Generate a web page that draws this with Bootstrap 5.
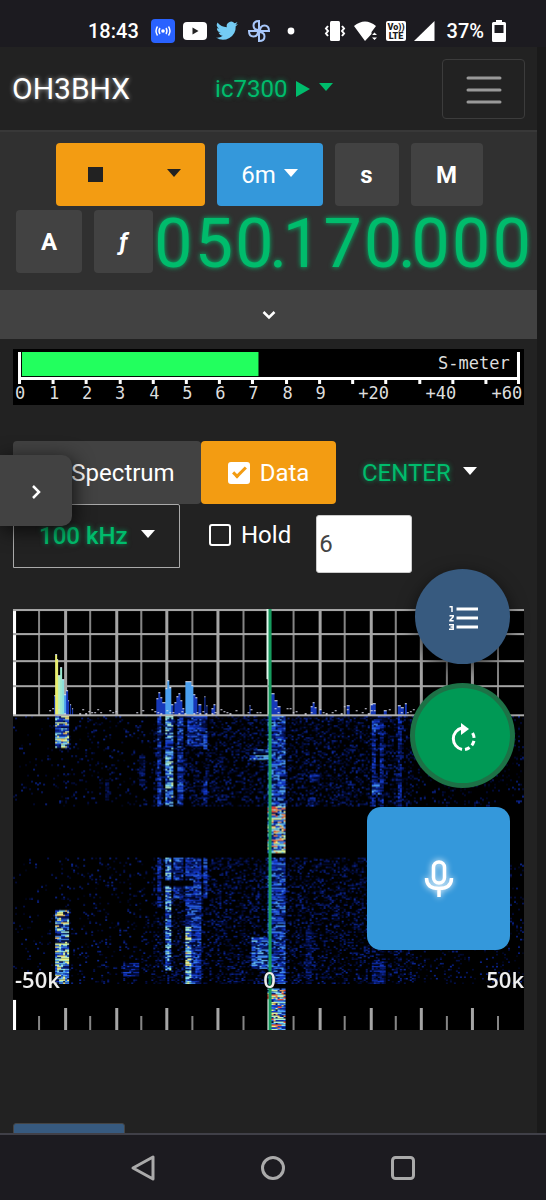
<!DOCTYPE html>
<html lang="en">
<head>
<meta charset="utf-8">
<meta name="viewport" content="width=device-width, initial-scale=1">
<title>OH3BHX</title>
<link href="https://cdn.jsdelivr.net/npm/bootstrap@5.3.0/dist/css/bootstrap.min.css" rel="stylesheet">
<style>
:root { --glow: #00bc6c; }
body { background: #222; color: #fff; font: 24px/36px Roboto, sans-serif; }
.phone-bar { background: #1c1b20; height: 47px; padding: 14px 40px 0 88px; font-size: 20px; line-height: 30px; font-weight: 500; }
.phone-bar svg { flex: none; }
.phone-bar .first-icon { margin-left: 12px; }
.app-area { border-right: 9px solid #1a1a1a; }
.top-nav { height: 85px; padding: 0 12px; border-bottom: 2px solid #383838; }
.call-sign { font-size: 30px; color: #fff; text-shadow: 0 0 5px #fff9; margin-right: 85px; }
.glow, .glow:hover { color: var(--glow); text-shadow: 0 0 5px #00bc6caa; }
.menu-btn { width: 83px; height: 60px; border: 1px solid #3c3c3c; border-radius: 4px; background: none; padding: 0; }
.tri { display: inline-block; border: 7px solid transparent; border-top: 8px solid; border-bottom: 0; }
.radio-panel { background: #303030; padding: 11px 5px 16px 16px; }
.tune-row { margin-left: -10px; gap: 12px; margin-bottom: 4px; }
.ctl { --bs-btn-color: #fff; --bs-btn-bg: #424242; --bs-btn-hover-bg: #505050; --bs-btn-hover-color: #fff; --bs-btn-border-color: transparent;
  height: 63px; padding: 0 12px; font-size: 24px; line-height: 36px; border: 0; border-radius: 4px; display: flex; align-items: center; justify-content: center; }
.ctl.orange { --bs-btn-bg: #f39c12; --bs-btn-hover-bg: #e08e0b; }
.ctl.blue { --bs-btn-bg: #3498db; --bs-btn-hover-bg: #2a86c4; }
.ctl.dark-ink { color: #222; }
.w-60 { width: 59px; } .w-64 { width: 64px; } .w-66 { width: 66px; } .w-72 { width: 72px; } .w-106 { width: 106px; } .w-135 { width: 135px; } .w-149 { width: 149px; } .w-188 { width: 188px; }
.stop-sq { width: 15px; height: 15px; background: #222; }
.freq { font: 400 68px/68px Roboto, sans-serif; color: var(--glow); text-shadow: 0 0 5px #00bc6c; height: 64px; min-width: 0; }
.freq span { flex: 1 1 0; min-width: 0; display: flex; justify-content: center; }
.freq .dot { flex: 0 0 7px; }
.expand { height: 49px; background: #424242; border: 0; }
.content-pad { padding: 10px 13px 0 13px; }
.meter { background: #000; margin-bottom: 36px; }
.meter text { font: 17px "DejaVu Sans Mono", monospace; fill: #ddd; text-anchor: middle; }
.pick { width: 167px; height: 64px; border: 1px solid #aaa; border-radius: 2px 2px 0 0; background: none; padding: 0 24px 0 25px; }
.plain { background: none; border: 0; padding: 0; }
.box { appearance: none; width: 22px; height: 22px; margin: 0; border: 2px solid #fff; border-radius: 3px; flex: none; }
.box:checked { background: #fff; }
.box:checked::after { content: ""; display: block; width: 7px; height: 14px; margin-left: 6px; border: solid #f39c12; border-width: 0 3px 3px 0; transform: rotate(45deg); }
.gap-check { gap: 10px; }
.center-pick { gap: 12px; margin-left: 26px; }
.hold { margin: 13px 25px 0 29px; }
.avg { width: 96px; height: 58px; border: 1px solid #ccc; border-radius: 3px; padding: 0 2px; color: #444; font-size: 24px; margin-top: 11px; }
.scope { margin-top: 36px; background: #000; }
.scope canvas { display: block; width: 100%; }
.scope-labels { left: 2px; right: 0; bottom: 36px; font: 600 22px/30px "Open Sans", sans-serif; color: #eee; text-shadow: 0 0 2px #000; }
.scope-labels span { flex: 1 1 0; }
.drawer { left: 0; top: 455px; width: 72px; height: 71px; background: #424242; border: 0; border-radius: 0 10px 10px 0; box-shadow: 2px 4px 20px #000b; }
.float-stack { right: 36px; bottom: 250px; gap: 24px; }
.round { width: 95px; height: 95px; border: 0; border-radius: 50%; background: #375a7f; padding: 0; box-shadow: 0 6px 18px #000a; }
.round.green { background: #009955; box-shadow: 0 0 0 5px #1d7146, 0 4px 18px #000a; }
.mic { width: 143px; height: 143px; border: 0; border-radius: 14px; background: #3498db; padding: 0; }
.mic svg { filter: drop-shadow(0 0 3px #fff); }
.more { width: 112px; height: 60px; margin-top: 93px; background: #375a7f; border: 1px solid #444; border-radius: 3px; }
.phone-nav { height: 67px; background: #1c1b20; border-top: 2px solid #404048; gap: 100px; }
</style>
</head>
<body>
<div class="vh-100 d-flex flex-column overflow-hidden position-relative">
  <div class="phone-bar d-flex align-items-center flex-shrink-0">
    <span class="me-auto d-flex align-items-center">
      <span>18:43</span>
      <svg class="first-icon" width="24" height="24" viewBox="0 0 24 24" fill="none" stroke="#fff" stroke-width="1.4"><rect width="24" height="24" rx="4" fill="#2962ff" stroke="none"/><circle cx="12" cy="12" r="1.8" fill="#fff" stroke="none"/><path d="M9 9q-2 3 0 6M15 9q2 3 0 6M6.500 7.500q-3 4.500 0 9M17.500 7.500q3 4.500 0 9"/></svg>
      <svg class="ms-2" width="24" height="24" viewBox="0 0 24 24"><rect y="3" width="24" height="18" rx="4" fill="#fff"/><path d="M9.500 8.500v7l6-3.500z" fill="#222"/></svg>
      <svg class="ms-2" width="24" height="24" viewBox="0 0 24 24"><path fill="#74ccf4" d="M23 4.900a9 9 0 0 1-2.600.7 4.500 4.500 0 0 0 2-2.500 9 9 0 0 1-2.900 1.100 4.500 4.500 0 0 0-7.700 4.100A12.800 12.800 0 0 1 2.500 3.600a4.500 4.500 0 0 0 1.400 6 4.500 4.500 0 0 1-2-.6 4.500 4.500 0 0 0 3.600 4.500 4.500 4.500 0 0 1-2 .1 4.500 4.500 0 0 0 4.200 3.100A9 9 0 0 1 1 18.600a12.800 12.800 0 0 0 19.700-11.400A9 9 0 0 0 23 4.900z"/></svg>
      <svg class="ms-2" width="24" height="24" viewBox="0 0 24 24" fill="none" stroke="#a8c7fa" stroke-width="2"><path id="fan" d="M12 12V2Q6.500 2 6.500 6.500T12 11"/><use href="#fan" transform="rotate(90 12 12)"/><use href="#fan" transform="rotate(180 12 12)"/><use href="#fan" transform="rotate(270 12 12)"/></svg>
      <svg class="ms-3" width="8" height="8" viewBox="0 0 8 8"><circle cx="4" cy="4" r="3.400" fill="#fff"/></svg>
    </span>
    <span class="d-flex align-items-center gap-2">
      <svg width="22" height="22" viewBox="0 0 22 22" fill="none" stroke="#fff" stroke-width="2"><rect x="6" y="1" width="10" height="20" rx="1.500" fill="#fff" stroke="none"/><path d="M4 6 2 8.500l2 2.500-2 2.500L4 16M18 6l2 2.500-2 2.500 2 2.500-2 2.500"/></svg>
      <svg width="24" height="22" viewBox="0 0 24 22" fill="#fff"><path d="M0 6q11-9 22 0l-4.500 6v2L11 21zM18 15l2.500-2.500L23 15zM18 17.500h5L20.500 20z"/></svg>
      <svg width="20" height="22" viewBox="0 0 20 22"><rect y="1" width="20" height="20" rx="2" fill="#fff"/><text x="10" y="10" text-anchor="middle" font-family="Roboto" font-weight="900" font-size="9" fill="#1c1b20">Vo))</text><text x="10" y="19" text-anchor="middle" font-family="Roboto" font-weight="900" font-size="9" fill="#1c1b20">LTE</text></svg>
      <svg width="21" height="22" viewBox="0 0 21 22"><path d="M20.500 1v20H0z" fill="#fff"/></svg>
      <span class="ms-1">37%</span>
      <svg width="14" height="22" viewBox="0 0 14 22"><path fill="#fff" fill-rule="evenodd" d="M4 0h6v2h2.500q1.500 0 1.500 1.500v17q0 1.500-1.500 1.500h-11Q0 22 0 20.500v-17Q0 2 1.500 2H4zM2.500 5v8h9V5z"/></svg>
    </span>
  </div>

  <div class="app-area flex-grow-1 overflow-hidden">
    <nav class="top-nav d-flex align-items-center">
      <a class="call-sign text-decoration-none" href="#">OH3BHX</a>
      <button class="plain glow d-flex align-items-center" type="button">ic7300
        <svg class="ms-2" width="16" height="18" viewBox="0 0 16 18"><path d="M1 1v16l14-8z" fill="#00bc6c"/></svg>
        <span class="tri ms-2 mb-1"></span></button>
      <button class="menu-btn ms-auto" type="button" aria-label="Menu"><svg width="38" height="30" viewBox="0 0 38 30" stroke="#999" stroke-width="3" stroke-linecap="round"><path d="M3 3h32M3 15h32M3 27h32"/></svg></button>
    </nav>

    <section class="radio-panel">
      <div class="tune-row d-flex justify-content-center">
        <button class="btn ctl orange dark-ink w-149 justify-content-between px-4" type="button" aria-label="Mode"><span class="stop-sq ms-2"></span><span class="tri mb-1"></span></button>
        <button class="btn ctl blue w-106" type="button">6m<span class="tri ms-2 mb-1"></span></button>
        <button class="btn ctl w-64 fw-bold" type="button">s</button>
        <button class="btn ctl w-72 fw-bold" type="button">M</button>
      </div>
      <div class="d-flex">
        <button class="btn ctl w-66 fw-bold flex-shrink-0 me-2" type="button">A</button>
        <button class="btn ctl w-60 fw-bold fst-italic flex-shrink-0 ms-1" type="button">ƒ</button>
        <div class="freq d-flex flex-grow-1"><span>0</span><span>5</span><span>0</span><span class="dot">.</span><span>1</span><span>7</span><span>0</span><span class="dot">.</span><span>0</span><span>0</span><span>0</span></div>
      </div>
    </section>
    <button class="expand w-100 d-flex align-items-center justify-content-center" type="button" aria-label="Expand"><svg width="14" height="10" viewBox="0 0 14 10" fill="none" stroke="#fff" stroke-width="2.500"><path d="m1.500 2 5.500 5.500L12.500 2"/></svg></button>

    <main class="content-pad">
      <svg class="meter d-block w-100" viewBox="0 0 510 56">
        <rect x="9" y="3" width="236" height="24" fill="#22ff5e"/>
        <path fill="none" stroke="#fff" stroke-width="3" d="M6.500 3v32M504.500 3v32M5 29.500h500M40 30v5M73 30v5M107 30v5M140 30v5M173 30v5M206 30v5M239 30v5M273 30v5M306 30v5M339 30v5M372 30v5M406 30v5M439 30v5M472 30v5"/>
        <text x="460" y="20">S-meter</text>
        <text x="7" y="50">0</text><text x="41" y="50">1</text><text x="74" y="50">2</text><text x="107" y="50">3</text><text x="141" y="50">4</text><text x="174" y="50">5</text><text x="207" y="50">6</text><text x="240" y="50">7</text><text x="274" y="50">8</text><text x="307" y="50">9</text>
        <text x="360" y="50">+20</text><text x="427" y="50">+40</text><text x="493" y="50">+60</text>
      </svg>

      <div class="d-flex align-items-center">
        <label class="btn ctl gap-check w-188"><input class="box" type="checkbox"><span>Spectrum</span></label>
        <label class="btn ctl gap-check orange w-135"><input class="box" type="checkbox" checked>Data</label>
        <button class="plain glow center-pick d-flex align-items-center" type="button">CENTER<span class="tri mb-1 text-white"></span></button>
      </div>
      <div class="d-flex align-items-start">
        <button class="pick glow d-flex align-items-center justify-content-between fw-medium" type="button">100 kHz<span class="tri mb-1 text-white"></span></button>
        <label class="hold gap-check d-flex align-items-center"><input class="box" type="checkbox">Hold</label>
        <input class="avg" type="text" value="6" aria-label="Averaging">
      </div>

      <div class="scope position-relative">
        <canvas id="scope" width="510" height="420"></canvas>
        <div class="scope-labels position-absolute d-flex"><span>-50k</span><span class="text-center">0</span><span class="text-end">50k</span></div>
      </div>
      <button class="more d-block" type="button" aria-label="More"></button>
    </main>
  </div>

  <button class="drawer position-absolute" type="button" aria-label="Open side panel"><svg width="10" height="16" viewBox="0 0 10 16" fill="none" stroke="#fff" stroke-width="2.500"><path d="m2 2 6 6-6 6"/></svg></button>

  <div class="float-stack position-absolute d-flex flex-column align-items-end">
    <button class="round" type="button" aria-label="Memory list"><svg width="30" height="26" viewBox="0 0 30 26" fill="none" stroke="#fff"><path stroke-width="3" d="M8.500 4H30M8.500 13H30M8.500 22H30"/><path stroke-width="1.500" d="M1.500 1.800H4V7M1.500 10.800h3.700v1L2 15.200v.5h3.700M1 19.800h4.200v4.400H1M2.500 22h2.700"/></svg></button>
    <button class="round green" type="button" aria-label="Refresh"><svg width="30" height="30" viewBox="0 0 30 30" fill="none" stroke="#fff" stroke-width="3"><path d="M14 27.500A11 11 0 0 1 14 6"/><path stroke-dasharray="5 3" d="M17 27.500A11 11 0 0 0 23 9"/><path d="m13 1 8 6-8 6z" fill="#fff" stroke="none"/></svg></button>
    <button class="mic" type="button" aria-label="Push to talk"><svg width="30" height="38" viewBox="0 0 30 38" fill="none" stroke="#fff" stroke-width="3.500"><rect x="9.500" y="2" width="11" height="21" rx="5.500"/><path d="M2.500 18q0 10.500 12.500 10.500T27.500 18M15 28.500V37"/></svg></button>
  </div>

  <div class="phone-nav d-flex align-items-center justify-content-center flex-shrink-0">
    <svg width="30" height="30" viewBox="0 0 30 30" fill="none" stroke="#aaa" stroke-width="3" stroke-linejoin="round"><path d="M5 15 25 4v22z"/></svg>
    <svg width="30" height="30" viewBox="0 0 30 30" fill="none" stroke="#aaa" stroke-width="3"><circle cx="15" cy="15" r="10.500"/></svg>
    <svg width="30" height="30" viewBox="0 0 30 30" fill="none" stroke="#aaa" stroke-width="3"><rect x="4.500" y="4.500" width="21" height="21" rx="3"/></svg>
  </div>
</div>

<script src="https://cdn.jsdelivr.net/npm/bootstrap@5.3.0/dist/js/bootstrap.bundle.min.js"></script>
<script>
const g = document.getElementById('scope').getContext('2d');
let seed = 7300;
const rnd = () => (seed = (seed * 1664525 + 1013904223) % 4294967296) / 4294967296;
const box = (c, x, y, w, h) => { g.fillStyle = c; g.fillRect(x, y, w, h); };
// signal strength to waterfall colour
function heat(v) {
  const s = [[0,0,0],[3,14,72],[20,60,215],[80,165,245],[150,235,235],[240,245,130],[240,70,60]];
  const t = Math.min(5.99, Math.max(0, v * 4.5)), i = Math.floor(t), f = t - i;
  return 'rgb(' + s[i].map((a, k) => Math.round(a + (s[i + 1][k] - a) * f)).join() + ')';
}
// carriers in the waterfall: left, right, top, bottom, strength
const sig = [
  [41,56,107,138,1],[143,148,107,196,.5],[152,160,107,196,.85],[163,169,107,196,.5],[174,190,107,136,.5],[190,194,107,139,.5],[190,194,168,194,.5],
  [240,255,139,144,.6],[235,255,145,150,.75],[126,131,145,175,.3],[91,95,170,190,.25],[253,271,107,196,.6],[357,362,107,196,.4],[365,369,107,196,.4],[357,366,107,125,.5],[357,365,173,185,.6],
  [384,387,107,196,.4],[296,306,164,172,.4],[294,302,188,196,.4],
  [253,271,197,243,1.150],[41,56,300,374,1],[143,147,248,297,.45],[152,158,248,360,.8],[159,170,248,288,.5],[172,188,248,374,.5],[171,178,316,374,1],[190,193,248,288,.5],
  [205,207,280,298,.3],[238,255,327,358,.65],[110,125,353,366,.4],[253,271,248,374,.55],[253,271,378,420,1.150],[357,372,350,374,.35],[292,298,320,374,.3]
];
const noise = x => x < 45 ? .05 : x < 140 ? .12 : x < 400 ? .42 : .15;
box('#000', 0, 0, 510, 420);
for (let y = 107; y < 420; y += 1.5) {
  const live = (y < 196) || (y >= 248 && y < 374);
  let hold = 0;
  for (let x = 0; x < 510; x += 2) {
    let v = live && rnd() < noise(x) ? rnd() * .36 : 0;
    // neighbouring cells often share a level, which gives the horizontal streaks
    if (rnd() < .6) hold = .15 + rnd() * 1.05;
    for (const [a, b, t, e, p] of sig)
      if (x >= a && x < b && y >= t && y < e) v = Math.max(v, p * hold);
    if (y > 270 && y < 276 && x > 147 && x < 180) v *= .15;
    if (v > .08) box(heat(v), x, y, 2, 1.5);
  }
}
// graticule
for (let i = 0; i < 20; i++) {
  const x = Math.round(i * 25.4), major = i % 2 === 0, w = i % 10 ? (major ? 3 : 2) : 3, c = i % 10 ? (major ? '#a5a5a5' : '#858585') : '#fff';
  box(c, x, 0, w, 106);
  const h = i % 10 ? (major ? 22 : 14) : 30;
  box(c, x, 420 - h, w, h);
}
for (const y of [0, 24, 51, 76]) box('#a5a5a5', 0, y, 510, 2);
// spectrum trace: left, width, height, colour
const dark = '#1638b8', light = '#4aa0f0';
const bar = (x, w, h, c) => { box(c, x, 105 - h, w, h); box('#dfe8ff', x, 104 - h, w, 1); };
[[41,2,18,dark],[42,2,59,'#e8ee70'],[44,1,54,'#e8ee70'],[45,2,38,'#b6efc0'],[47,2,46,'#9ae8d0'],[49,2,34,'#8ce0dc'],[51,2,19,light],[53,2,23,dark],[55,1,13,dark],[57,1,9,dark],[59,1,5,dark],
 [143,2,15,dark],[145,2,21,dark],[147,2,16,dark],[149,3,11,dark],[152,2,25,light],[154,2,33,light],[156,2,26,light],[158,2,9,dark],[161,2,11,dark],[163,2,17,dark],[165,2,20,dark],[167,2,13,dark],[169,2,5,dark],
 [172,6,32,light],[178,2,28,light],[180,2,19,dark],[182,2,16,dark],[185,3,9,dark],[191,1,17,dark],[193,1,8,dark],[198,2,5,dark],[200,2,9,dark],[236,1,8,dark],[255,3,37,'#72c0ff'],[258,3,20,dark],[261,3,13,dark],[264,3,7,dark],
 [297,2,7,dark],[299,2,11,dark],[301,2,6,dark],[306,2,4,dark],[333,3,8,dark],[357,2,9,dark],[359,3,10,dark],[370,3,3,dark],[384,3,8,dark],[387,3,6,dark],[391,2,10,dark]
].forEach(b => bar(...b));
for (let x = 36; x < 410; x += 3) if (rnd() < .5) box('#d8d8e8', x, 104 - Math.round(rnd() * rnd() * 7), 2, 1);
box('#b0b0b0', 0, 105, 510, 2);
box('#169b5e', 255, 0, 3, 420);
box('#dff5ea', 253, 0, 2, 70);
</script>
</body>
</html>
